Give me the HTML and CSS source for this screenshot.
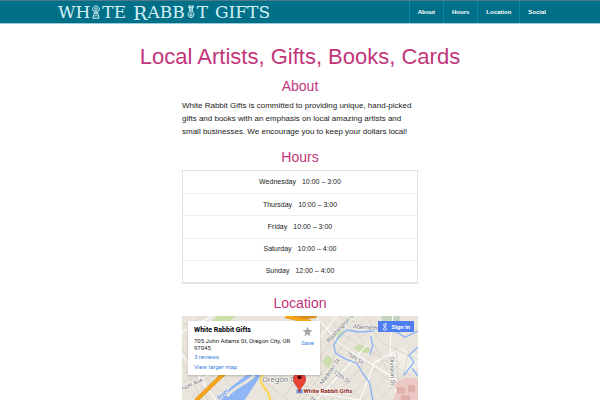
FILE: index.html
```html
<!DOCTYPE html>
<html lang="en">
<head>
<meta charset="utf-8">
<meta name="viewport" content="width=device-width, initial-scale=1">
<title>White Rabbit Gifts</title>
<link rel="stylesheet" href="styles.css">
</head>
<body>
<header class="topbar">
  <a class="logo" href="#" aria-label="White Rabbit Gifts">
    <span class="word"><span>WH</span><svg class="glyph" viewBox="0 0 8 14" aria-hidden="true"><path d="M2.600 7.200A3.300 3.300 0 1 1 5.400 7.200L7.200 13.200H.8Z"/><path d="M3.300 4.900A1.200 1.200 0 1 1 4.700 4.900L5 8.600H3Z"/><path d="M2.600 10.800H5.400"/></svg><span>TE</span></span>
    <span class="word"><span><span class="swash">R</span>ABB</span><svg class="glyph" viewBox="0 0 8 14" aria-hidden="true"><path d="M1.200 1H6.800M1.600 2.600H6.400M2 1L3 6C1.400 7.400 1 9 1.400 10.800A2.800 2.800 0 0 0 6.600 10.800C7 9 6.600 7.400 5 6L6 1M4 3V8"/><circle cx="4" cy="10" r="1.100"/></svg><span>T</span></span>
    <span class="word">GIFTS</span>
  </a>
  <nav class="menu">
    <a href="#about">About</a>
    <a href="#hours">Hours</a>
    <a href="#location">Location</a>
    <a href="#social">Social</a>
  </nav>
</header>
<main class="page">
  <h1>Local Artists, Gifts, Books, Cards</h1>
  <section id="about">
    <h2>About</h2>
    <p>White Rabbit Gifts is committed to providing unique, hand-picked gifts and books with an emphasis on local amazing artists and small businesses. We encourage you to keep your dollars local!</p>
  </section>
  <section id="hours">
    <h2>Hours</h2>
    <ul class="hours">
      <li><span>Wednesday</span><span>10:00 – 3:00</span></li>
      <li><span>Thursday</span><span>10:00 – 3:00</span></li>
      <li><span>Friday</span><span>10:00 – 3:00</span></li>
      <li><span>Saturday</span><span>10:00 – 4:00</span></li>
      <li><span>Sunday</span><span>12:00 – 4:00</span></li>
    </ul>
  </section>
  <section id="location" class="location">
    <h2>Location</h2>
    <div class="map">
      <svg class="tiles" viewBox="0 0 235 84" preserveAspectRatio="xMidYMin slice" role="img" aria-label="Street map of Oregon City">
        <rect width="235" height="84" fill="#e9e5dc"/>
        <path d="M35 0H53L47 6H30Z M153 17l5-6 4 5-6 8Z M139 46l6-7 6 5-5 8Z M170 32l5-3 9 1 4 4-4 3-8-2Z" fill="#cadfaa"/>
        <path d="M199 0h18v7h-18Z" fill="#c3d3bd"/>
        <path d="M207 40l12-8 16 6v14l-14 6-12-6Z" fill="#f1eee8"/>
        <g fill="none" stroke="#d6d1c8" stroke-width=".8">
          <path d="M0 10L24 0M0 24L14 12M0 32L26 84M0 47L20 84M6 44L48 84M2 57L18 50M0 67L30 52M10 80L38 60M16 52L28 68M28 52L20 62M38 56L60 84"/>
          <path d="M134 0L151 25L170 37L235 84M143 0L163 20L235 64M157 0L180 25M132 36L180 84M132 51L164 84M132 66L150 84M119 84L168 19M132 84L183 25M148 84L196 32M164 84L208 36M180 84L218 46M132 50L154 17M196 84L226 53"/>
          <path d="M86 52L132 84M98 52L143 84M80 64L106 84M90 72L104 54M102 80L119 57M114 84L130 63"/>
          <path d="M184 0L197 26L235 43M176 21L213 0M162 2L199 16M206 18L235 13M191 27L205 56M213 31L217 84M226 35L220 60"/>
        </g>
        <g fill="none" stroke="#fff" stroke-width="1">
          <path d="M0 16L30 0M0 38L34 84M0 73L38 52M132 28L154 0M133 0L156 27L174 39L207 59L235 82M132 76L178 84"/>
          <path d="M177 84L192 46L213 35M210 0L207 29L214 84M134 83L184 29"/>
        </g>
        <path d="M209 67l16-6 10 2v21h-25l4-10Z" fill="#ecc9c5"/>
        <path d="M214 71h8v6h-8ZM225 69h7v7h-7ZM218 79h9v5h-9Z" fill="#dfb0ac"/>
        <path d="M38 84C44 72 55 67 61 61L75 52H84C77 61 70 72 62 84Z" fill="#8eb5f5"/>
        <path d="M45 80C52 70 64 68 72 59" fill="none" stroke="#e9e5dc" stroke-width="3"/>
        <path d="M235 31L226 39L231 46L221 59M188 20L190 30L187 38M235 15L222 21L209 13L200 9L191 15L176 16L164 14L156 21L151 29L153 37L163 43L174 47L180 57L187 67L190 84M235 60L229 52" fill="none" stroke="#8eb5f5" stroke-width="1.4" stroke-linejoin="round"/>
        <path d="M103 0L128 6M14 84L43 56L50 49M112 2L134 0" fill="none" stroke="#d98e1f" stroke-width="4"/>
        <path d="M103 0L128 6M14 84L43 56L50 49" fill="none" stroke="#f9a71a" stroke-width="3"/>
        <path d="M88 84L86 77L79 67V60L85 51" fill="none" stroke="#fbd85b" stroke-width="2.4"/>
        <g class="road">
          <text transform="translate(-6 77) rotate(-24)">Sunset Ave</text>
          <text transform="translate(37 84) rotate(-45)" class="river">River</text>
          <text transform="translate(146 27) rotate(-47)">Washington St</text>
          <text transform="translate(170 12) rotate(5)">Abernethy</text>
          <text transform="translate(163 38) rotate(34)">15th St</text>
          <text transform="translate(150 57) rotate(34)">12th St</text>
          <text transform="translate(140 69) rotate(-55)">Madison St</text>
          <text transform="translate(207 41) rotate(88)">Division St</text>
          <text transform="translate(126 83) rotate(34)">7th St</text>
        </g>
        <text x="80" y="66" class="town">Oregon City</text>
        <rect x="114" y="73" width="6" height="4" fill="#6e8fd0"/>
        <path d="M117 76C116.500 70 111 69 111 62.500A6 6 0 0 1 123 62.500C123 69 117.500 70 117 76Z" fill="#ea4335" stroke="#b5281e" stroke-width=".7"/>
        <circle cx="117" cy="61" r="2" fill="#4a0c08"/>
        <text x="121" y="77" class="pin">White Rabbit Gifts</text>
      </svg>
      <div class="card">
        <div class="place">
          <h3>White Rabbit Gifts</h3>
          <address>705 John Adams St, Oregon City, OR 97045</address>
          <a href="#reviews">3 reviews</a>
          <a href="#map">View larger map</a>
        </div>
        <button class="save" type="button"><svg viewBox="0 0 12 12" aria-hidden="true"><path d="M6 .5l1.500 3.800 4 .3-3.100 2.600 1 4L6 9l-3.400 2.200 1-4L.5 4.600l4-.3Z" fill="#a5a5a5"/></svg>Save</button>
      </div>
      <button class="signin" type="button"><svg viewBox="0 0 6 9" aria-hidden="true"><path d="M5.200 1H2.800a1.500 1.500 0 1 0 .2 3c.9 0 1.300-.8 1.200-1.600L3.800 1M3 4c-.5.6.2.9.8 1.300C5.700 6.500 4.700 8 3 8 .7 8 .2 6.300 1.600 5.700 2.200 5.400 3 5.400 3.600 5.300" fill="none" stroke="#fff" stroke-width=".9"/></svg>Sign in</button>
    </div>
  </section>
</main>
</body>
</html>
```
FILE: styles.css
```css
* { box-sizing: border-box; }

body {
  margin: 0;
  height: 100vh;
  display: flex;
  flex-direction: column;
  overflow: hidden;
  background: #fff;
  color: #222;
  font-family: "Liberation Sans", Arial, sans-serif;
}

a { text-decoration: none; }

.topbar {
  flex: none;
  display: flex;
  justify-content: space-between;
  height: 24px;
  padding: 0 46px 0 58px;
  background: #007089;
  border-top: 1px solid #4a7b86;
  border-bottom: 1px solid #9bcbd7;
}

.logo {
  display: flex;
  align-items: center;
  gap: 7px;
  color: #d3f0f5;
  font: 17px/20px "DejaVu Serif", serif;
}

.word { display: flex; align-items: center; gap: 2px; }
.swash { font-size: 19px; line-height: 16px; vertical-align: -2px; }

.glyph {
  width: 8px;
  height: 14px;
  fill: none;
  stroke: #d3f0f5;
  stroke-width: 1;
}

.menu { display: flex; }

.menu a {
  padding: 0 8px;
  border-left: 1px solid #0a8aa3;
  color: #fff;
  font-size: 6px;
  font-weight: bold;
  line-height: 22px;
}

.page {
  flex: 1;
  display: flex;
  flex-direction: column;
  min-height: 0;
  padding-top: 19px;
}

h1, h2 {
  margin: 0;
  color: #c2357b;
  font-weight: normal;
  text-align: center;
}

h1 { font-size: 22px; line-height: 28px; }
h2 { font-size: 14px; line-height: 18px; }

section {
  width: 100%;
  max-width: 236px;
  margin: 0 auto;
  padding-top: 6px;
}

p {
  margin: 4px 0;
  font-size: 8px;
  line-height: 13px;
}

.hours {
  display: grid;
  grid-auto-rows: 1fr;
  min-height: 114px;
  margin: 4px 0;
  padding: 0;
  list-style: none;
  border: 1px solid #e2e2e2;
  border-bottom-width: 2px;
}

.hours li {
  display: flex;
  align-items: center;
  justify-content: center;
  gap: 6px;
  font-size: 7px;
  line-height: 10px;
}

.hours li + li { border-top: 1px solid #eee; }

.location {
  flex: 1;
  display: flex;
  flex-direction: column;
  min-height: 0;
}

.map {
  position: relative;
  flex: 1;
  min-height: 0;
  margin-top: 4px;
  overflow: hidden;
  font-family: Roboto, sans-serif;
}

.tiles { display: block; width: 100%; height: 100%; }

.road text { font-size: 6px; fill: #6b6b6b; stroke: #fff; stroke-width: 1px; paint-order: stroke; }
.road .river { fill: #3f78cf; }
.town { font-size: 8px; fill: #777; stroke: #fff; stroke-width: 1px; paint-order: stroke; }
.pin { font-size: 6px; font-weight: bold; fill: #8c1a14; stroke: #fff; stroke-width: 1px; paint-order: stroke; }

.card {
  position: absolute;
  top: 5px;
  left: 6px;
  display: flex;
  width: 132px;
  padding: 5px 6px 3px;
  background: #fff;
  box-shadow: 0 1px 2px #0003;
}

.place { flex: 1; font-size: 6px; line-height: 10px; }

.place h3 { margin: 0 0 2px; color: #000; font-size: 7px; line-height: 9px; font-weight: bold; }

.place address { margin-bottom: 1px; font-style: normal; line-height: 7px; }

.place a { display: block; color: #3a84df; }

.save, .signin {
  border: 0;
  padding: 0;
  font-family: inherit;
}

.save {
  align-self: flex-start;
  display: flex;
  flex-direction: column;
  align-items: center;
  background: none;
  color: #3a84df;
  font-size: 6px;
  line-height: 11px;
}

.save svg { width: 11px; height: 11px; }

.signin {
  position: absolute;
  top: 5px;
  right: 4px;
  display: flex;
  align-items: center;
  gap: 3px;
  height: 11px;
  padding: 0 4px;
  background: #4d7df0;
  color: #fff;
  font-size: 6px;
  font-weight: bold;
}

.signin svg { width: 6px; height: 8px; }
```
